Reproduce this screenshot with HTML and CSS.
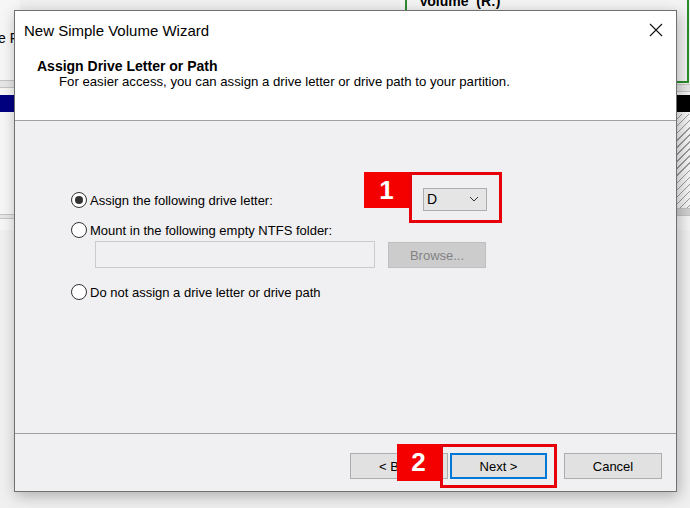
FILE: index.html
```html
<!DOCTYPE html>
<html lang="en">

<head>
    <meta name="viewport" content="width=device-width, initial-scale=1.0">
    <link rel="stylesheet" href="styles.css">
</head>

<body>
    <div class="desktop">
        <!-- Disk Management window behind the wizard -->
        <div class="bg-left">
            <span class="bg-text">e F</span>
            <div class="bg-lines"></div>
            <div class="bg-navy"></div>
            <div class="bg-lines bottom"></div>
        </div>
        <div class="bg-right">
            <div class="bg-volume"><span>Volume&nbsp; (R:)</span></div>
            <div class="bg-lines"></div>
            <div class="bg-black"></div>
            <div class="bg-hatch"></div>
            <div class="bg-lines bottom"></div>
        </div>

        <div class="dialog">
            <div class="dlg-head">
                <div class="title-bar">
                    <span class="title">New Simple Volume Wizard</span>
                    <svg class="close" width="14" height="14" viewBox="0 0 14 14">
                        <path d="M1 1 L13 13 M13 1 L1 13" stroke="#111" stroke-width="1.1" fill="none" />
                    </svg>
                </div>
                <div class="heading">Assign Drive Letter or Path</div>
                <div class="subheading">For easier access, you can assign a drive letter or drive path to your partition.</div>
            </div>

            <div class="dlg-body">
                <div class="option-row first">
                    <label class="option wide"><span class="radio checked"></span>Assign the following drive letter:</label>
                    <div class="select">
                        <span>D</span>
                        <svg width="10" height="6" viewBox="0 0 10 6">
                            <path d="M1 1 L5 5 L9 1" stroke="#333" stroke-width="1" fill="none" />
                        </svg>
                    </div>
                </div>
                <div class="option-row">
                    <label class="option"><span class="radio"></span>Mount in the following empty NTFS folder:</label>
                </div>
                <div class="folder-row">
                    <input type="text" class="folder" disabled>
                    <button class="btn disabled" disabled>Browse...</button>
                </div>
                <div class="option-row last">
                    <label class="option"><span class="radio"></span>Do not assign a drive letter or drive path</label>
                </div>
            </div>

            <div class="dlg-foot">
                <button class="btn back">&lt; Back</button>
                <button class="btn primary">Next &gt;</button>
                <button class="btn cancel">Cancel</button>
            </div>
        </div>

        <!-- tutorial markers -->
        <div class="mark-box box-1"></div>
        <div class="badge badge-1">1</div>
        <div class="mark-box box-2"></div>
        <div class="badge badge-2">2</div>
    </div>
</body>

</html>
```

FILE: styles.css
```css
body {
    margin: 0;
    font-family: "Liberation Sans", Arial, sans-serif;
    font-size: 13px;
    color: #000;
}

.desktop {
    position: relative;
    width: 690px;
    height: 508px;
    overflow: hidden;
    background: #f0f0f0;
}

/* ---------- background window ---------- */
.bg-left {
    position: absolute;
    left: 0;
    top: 0;
    width: 20px;
    height: 230px;
    background: #f6f6f6;
}

.bg-text {
    position: absolute;
    left: -2px;
    top: 30px;
    font-size: 14px;
    white-space: nowrap;
}

.bg-lines {
    position: absolute;
    left: 0;
    right: 0;
    top: 80px;
    height: 6px;
    border-top: 1px solid #c4c4c4;
    border-bottom: 1px solid #c4c4c4;
    background: #e6e6e6;
}

.bg-lines.bottom {
    top: 214px;
    height: 3px;
}

.bg-navy {
    position: absolute;
    left: 0;
    right: 0;
    top: 95px;
    height: 17px;
    background: #000080;
}

.bg-right {
    position: absolute;
    left: 400px;
    top: 0;
    width: 290px;
    height: 230px;
    background: #f4f4f4;
}

.bg-volume {
    position: absolute;
    left: 5px;
    top: -6px;
    width: 280px;
    height: 85px;
    border: 2px solid #2e8b2e;
    background: #f4f4f4;
}

.bg-volume span {
    position: absolute;
    left: 12px;
    top: -3px;
    font-weight: bold;
    font-size: 14px;
}

.bg-right .bg-lines {
    top: 84px;
}

.bg-right .bg-lines.bottom {
    top: 208px;
    height: 6px;
    background: #d0d0d0;
}

.bg-black {
    position: absolute;
    left: 0;
    right: 0;
    top: 95px;
    height: 17px;
    background: #000;
}

.bg-hatch {
    position: absolute;
    left: 0;
    right: 0;
    top: 114px;
    height: 94px;
    background: repeating-linear-gradient(135deg, #f4f4f4 0 4px, #9a9a9a 4px 5px);
}

/* ---------- wizard dialog ---------- */
.dialog {
    position: absolute;
    left: 14px;
    top: 10px;
    width: 661px;
    height: 480px;
    border: 1px solid #707070;
    background: #f0eff1;
    box-shadow: 2px 4px 14px rgba(0, 0, 0, 0.28);
    display: flex;
    flex-direction: column;
}

.dlg-head {
    height: 109px;
    background: #fff;
    border-bottom: 1px solid #a0a0a0;
}

.title-bar {
    display: flex;
    align-items: center;
    justify-content: space-between;
    height: 38px;
    padding: 0 13px 0 9px;
}

.title {
    font-size: 15px;
}

.heading {
    margin: 9px 0 0 22px;
    font-weight: bold;
    font-size: 14px;
}

.subheading {
    margin: 0 0 0 44px;
    font-size: 13.2px;
}

.dlg-body {
    height: 313px;
    border-bottom: 1px solid #a0a0a0;
    padding-left: 56px;
    box-sizing: border-box;
    padding-top: 66px;
}

.option-row {
    display: flex;
    align-items: center;
    height: 24px;
}

.option-row.first {
    margin-bottom: 6px;
}

.option-row.last {
    margin-top: 11px;
}

.option {
    display: flex;
    align-items: center;
    gap: 3px;
    height: 16px;
    margin-top: 2px;
}

.option.wide {
    width: 352px;
}

.radio {
    position: relative;
    box-sizing: border-box;
    width: 16px;
    height: 16px;
    border: 1px solid #333;
    border-radius: 50%;
    background: #fff;
}

.radio.checked::after {
    content: "";
    position: absolute;
    left: 3px;
    top: 3px;
    width: 8px;
    height: 8px;
    border-radius: 50%;
    background: #333;
}

.select {
    box-sizing: border-box;
    width: 64px;
    height: 23px;
    border: 1px solid #acacac;
    background: #e5e5e5;
    display: flex;
    align-items: center;
    justify-content: space-between;
    padding: 0 7px 0 3px;
    font-size: 14px;
}

.folder-row {
    display: flex;
    align-items: flex-start;
    gap: 13px;
    margin: 0 0 0 24px;
}

.folder {
    box-sizing: border-box;
    width: 280px;
    height: 27px;
    border: 1px solid #cbcbcb;
    background: #f0eff1;
}

.btn {
    box-sizing: border-box;
    width: 98px;
    height: 26px;
    border: 1px solid #adadad;
    background: #e1e1e1;
    font-family: inherit;
    font-size: 13px;
    color: #000;
    padding: 0;
}

.btn.disabled {
    margin-top: 1px;
    background: #cccccc;
    border-color: #bfbfbf;
    color: #838383;
}

.dlg-foot {
    flex: 1;
    display: flex;
    justify-content: flex-end;
    align-items: flex-start;
    padding: 19px 14px 0 0;
}

.btn.primary {
    width: 97px;
    margin-left: 2px;
    border: 2px solid #0078d7;
}

.btn.cancel {
    margin-left: 17px;
}

/* ---------- red markers ---------- */
.mark-box {
    position: absolute;
    box-sizing: border-box;
    border: 3px solid #e5000a;
}

.box-1 {
    left: 409px;
    top: 172px;
    width: 93px;
    height: 51px;
}

.box-2 {
    left: 440px;
    top: 444px;
    width: 117px;
    height: 44px;
}

.badge {
    position: absolute;
    display: flex;
    align-items: center;
    justify-content: center;
    background: #f50000;
    color: #fff;
    font-family: "Liberation Sans", Arial, sans-serif;
    font-weight: bold;
    font-size: 26px;
}

.badge-1 {
    left: 364px;
    top: 172px;
    width: 45px;
    height: 36px;
}

.badge-2 {
    left: 397px;
    top: 444px;
    width: 43px;
    height: 37px;
}
```
